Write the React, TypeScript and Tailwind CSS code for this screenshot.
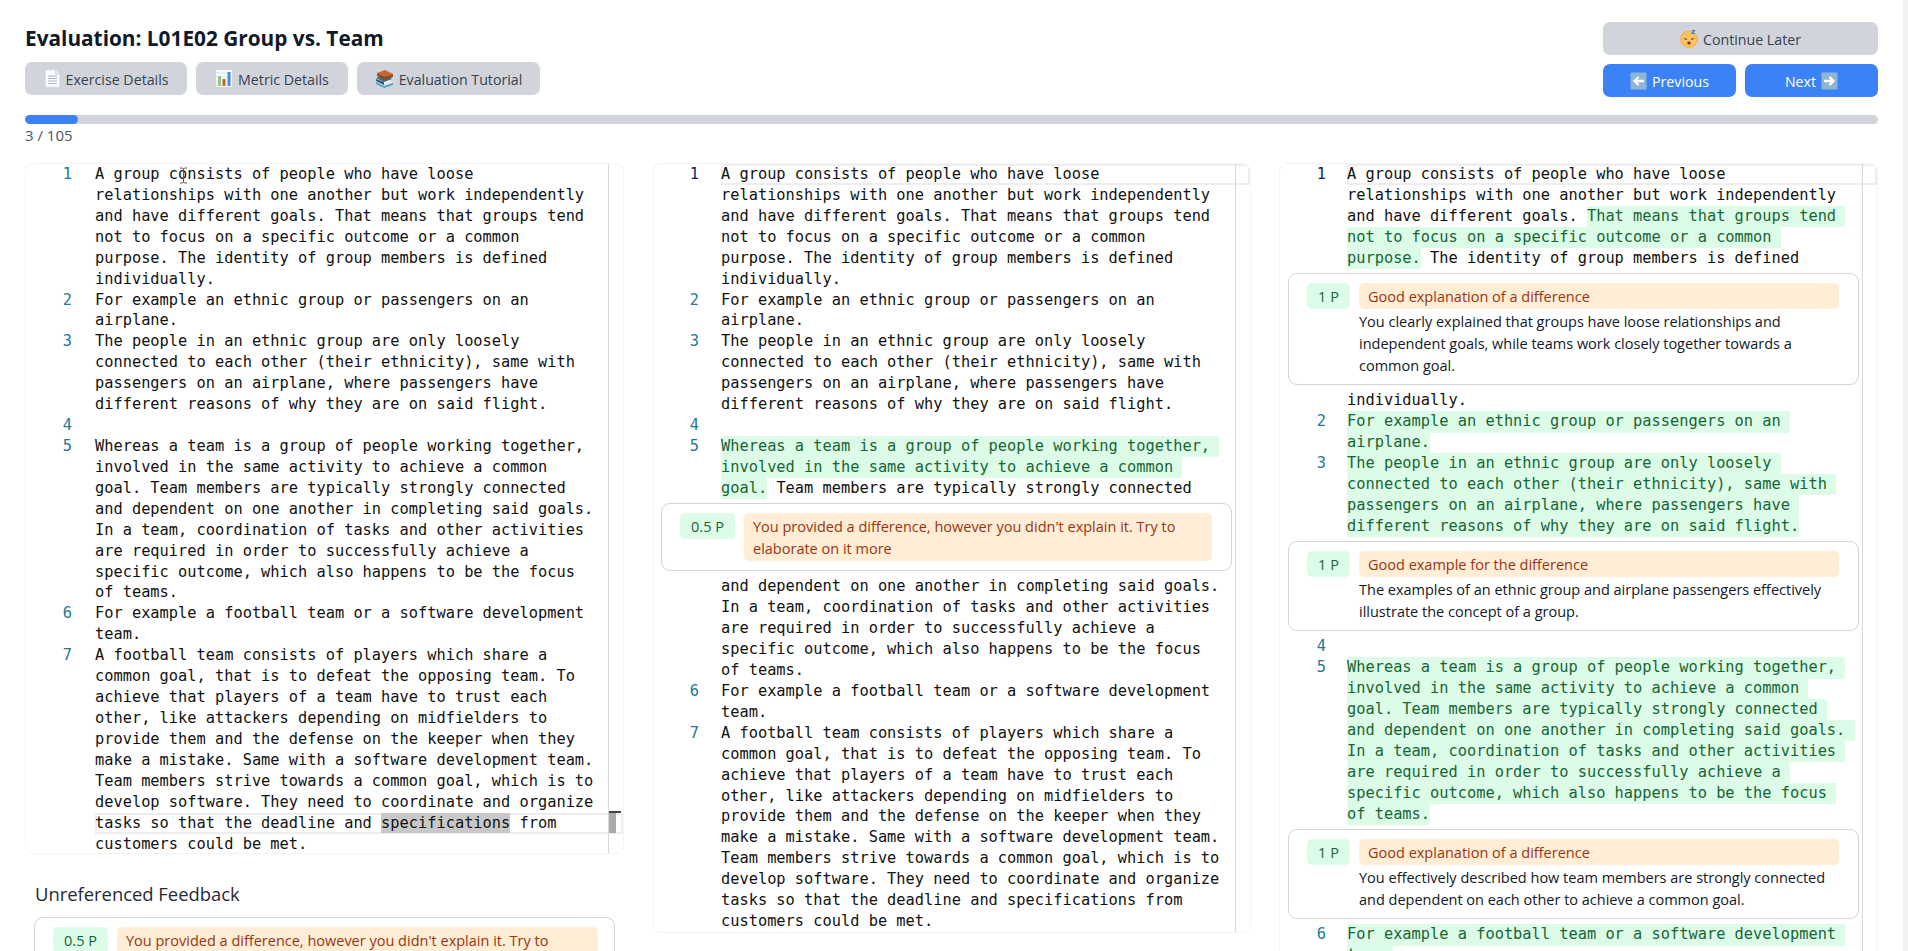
import React from "react";

type Seg = { t: string; h?: boolean; sel?: boolean };
type Row = { n?: number; segs: Seg[]; active?: boolean; box?: boolean } | { card: Fb; mt?: string; mb?: string };
type Fb = { score: string; title: string; body?: string[] };

const plain = (t: string, n?: number): Row => ({ n, segs: [{ t }] });
const hi = (t: string, n?: number): Row => ({ n, segs: [{ t, h: true }] });

const DocIcon = () => (
  <svg width="17" height="19" viewBox="0 0 17 19" className="shrink-0">
    <path d="M1.5 1h10l4 4v13h-14z" fill="#fbfdff" stroke="#cfe6f5" />
    <path d="M11.5 1v4h4" fill="#dbeefa" stroke="#bcdcf0" />
    <path d="M4 7h9M4 9.5h9M4 12h9M4 14.5h9" stroke="#a9b3bd" strokeWidth="1" />
  </svg>
);
const ChartIcon = () => (
  <svg width="18" height="19" viewBox="0 0 18 19" className="shrink-0">
    <rect x="1" y="1" width="16" height="17" fill="#f8fafc" />
    <path d="M1 4h16M1 8h16M1 12h16M1 16h16" stroke="#dbe3ea" strokeWidth="1" />
    <rect x="3" y="7" width="3" height="10" fill="#9cc58a" />
    <rect x="7.5" y="10" width="3" height="7" fill="#c8662f" />
    <rect x="12.5" y="3" width="3" height="14" fill="#4a90d9" />
  </svg>
);
const BooksIcon = () => (
  <svg width="19" height="19" viewBox="0 0 19 19" className="shrink-0">
    <path d="M1 13l8 4 9-3v2l-9 3-8-4z" fill="#4fa9c9" />
    <path d="M1 12l9-3 8 4-9 3z" fill="#e8eef2" />
    <path d="M1 9l9-3 7 4-8 3z" fill="#3e6d86" />
    <path d="M1 10v2l8 4v-3z" fill="#2f5a72" />
    <path d="M2 4l8-3 8 4-8 3z" fill="#c8662f" />
    <path d="M2 4v3l8 4 8-3V5l-8 3z" fill="#8c4a26" />
  </svg>
);
const SleepIcon = () => (
  <svg width="18" height="19" viewBox="0 0 18 19" className="shrink-0">
    <circle cx="9" cy="10.3" r="8.4" fill="#f7c25f" />
    <circle cx="9" cy="10.3" r="8.4" fill="none" stroke="#eda94a" strokeWidth="0.8" />
    <path d="M4 9.5l3 1M14 9.5l-3 1" stroke="#6b4a2a" strokeWidth="1.1" fill="none" />
    <ellipse cx="9" cy="14" rx="1.7" ry="1.5" fill="#6b3a22" />
    <path d="M12 1.5h2.5L12 4.5h3" stroke="#4a7fc1" strokeWidth="1.2" fill="none" />
  </svg>
);
const ArrowIcon = ({ right }: { right?: boolean }) => (
  <svg width="17" height="18" viewBox="0 0 17 18" className="shrink-0">
    <rect x="0.5" y="0.5" width="16" height="17" rx="1" fill="#8fb6d1" />
    <path
      d={right ? "M3 9h9M8.5 5l4 4-4 4" : "M14 9H5M8.5 5l-4 4 4 4"}
      stroke="#ffffff"
      strokeWidth="2.4"
      fill="none"
    />
  </svg>
);
const IBeam = () => (
  <svg width="9" height="17" viewBox="0 0 9 17" className="absolute left-[153px] top-[3px]">
    <path d="M1 1h2.5l1 1 1-1H8M4.5 2v13M1 16h2.5l1-1 1 1H8" stroke="#555" strokeWidth="1" fill="none" />
  </svg>
);

const GrayButton = ({ icon, label, w }: { icon: React.ReactNode; label: string; w: string }) => (
  <button className={`flex h-[33px] items-center justify-center gap-[5px] rounded-[7px] bg-[#d1d5db] text-[14.2px] text-[#374151] ${w}`}>
    {icon}
    <span className="pt-[2px]">{label}</span>
  </button>
);

const Badge = ({ score }: { score: string }) => (
  <div className={`flex h-[26px] shrink-0 items-center justify-center rounded-[5px] bg-[#dcfce7] pt-[1px] text-[#166534] ${score === "1 P" ? "w-[43px]" : "w-[55px]"}`}>{score}</div>
);

const Card = ({ fb, mt, mb }: { fb: Fb; mt?: string; mb?: string }) => (
  <div className={`ml-[8px] w-[571px] ${mt ?? "mt-[4.6px]"} ${mb ?? "mb-[5px]"} flex items-start gap-[9px] rounded-[9px] border border-[#d1d5db] bg-white pb-[9px] pl-[18px] pr-[19px] pt-[9px] font-['Open_Sans',sans-serif] text-[14.5px] leading-[22px]`}>
    <Badge score={fb.score} />
    <div className="min-w-0 flex-1">
      <div className="rounded-[5px] bg-[#ffedd5] px-[9px] pb-[1px] pt-[3px] text-[#9a3412]">{fb.title}</div>
      {fb.body && (
        <div className="-mb-[2px] mt-[2px]">
          {fb.body.map((l) => (
            <div key={l} className="whitespace-pre text-[#111827]">{l}</div>
          ))}
        </div>
      )}
    </div>
  </div>
);

const Line = ({ row, gutter, box }: { row: any; gutter: string; box?: boolean }) => (
  <div className="relative flex h-[20.93px] font-['DejaVu_Sans_Mono',monospace] text-[15.33px] leading-[20.9px]">
    <div className={`${gutter} shrink-0 text-right ${row.active ? "text-[#0b216f]" : "text-[#237893]"}`}>{row.n ?? ""}</div>
    <div className="relative flex-1 whitespace-pre text-[#111]">
      {box && <div className="absolute inset-y-0 left-0 right-0 border-2 border-[#eeeeee]" />}
      {row.segs.map((s: Seg, i: number) =>
        s.h ? (
          <span key={i} className="relative inline-block h-[21.5px] rounded-[2px] bg-[#dcfce7] text-[#166534]">{s.t}</span>
        ) : s.sel ? (
          <span key={i} className="relative inline-block h-[20.9px] bg-[#c8c8c8]">{s.t}</span>
        ) : (
          <span key={i} className="relative">{s.t}</span>
        ),
      )}
    </div>
  </div>
);

const Panel = ({ rows, gutter, h, extra }: { rows: Row[]; gutter: string; h: string; extra?: React.ReactNode }) => (
  <div className={`relative overflow-hidden rounded-[9px] border border-[#f3f4f6] bg-white ${h}`}>
    {rows.map((r: any, i) =>
      r.card ? (
        <Card key={i} fb={r.card} mt={r.mt} mb={r.mb} />
      ) : (
        <Line key={i} row={r} gutter={gutter} box={r.box} />
      ),
    )}
    <div className="absolute bottom-0 left-[582px] top-0 w-px bg-[#d8d8d8]" />
    {extra}
  </div>
);

const line1 = [
  "A group consists of people who have loose",
  "relationships with one another but work independently",
  "and have different goals. That means that groups tend",
  "not to focus on a specific outcome or a common",
  "purpose. The identity of group members is defined",
  "individually.",
];
const line2 = ["For example an ethnic group or passengers on an", "airplane."];
const line3 = [
  "The people in an ethnic group are only loosely",
  "connected to each other (their ethnicity), same with",
  "passengers on an airplane, where passengers have",
  "different reasons of why they are on said flight.",
];
const line5 = [
  "Whereas a team is a group of people working together,",
  "involved in the same activity to achieve a common",
  "goal. Team members are typically strongly connected",
  "and dependent on one another in completing said goals.",
  "In a team, coordination of tasks and other activities",
  "are required in order to successfully achieve a",
  "specific outcome, which also happens to be the focus",
  "of teams.",
];
const line6 = ["For example a football team or a software development", "team."];
const line7 = [
  "A football team consists of players which share a",
  "common goal, that is to defeat the opposing team. To",
  "achieve that players of a team have to trust each",
  "other, like attackers depending on midfielders to",
  "provide them and the defense on the keeper when they",
  "make a mistake. Same with a software development team.",
  "Team members strive towards a common goal, which is to",
  "develop software. They need to coordinate and organize",
  "tasks so that the deadline and specifications from",
  "customers could be met.",
];

const block = (ls: string[], n?: number): Row[] => ls.map((t, i) => plain(t, i === 0 ? n : undefined));

const col1: Row[] = [
  ...block(line1, 1),
  ...block(line2, 2),
  ...block(line3, 3),
  plain("", 4),
  ...block(line5, 5),
  ...block(line6, 6),
  ...block(line7.slice(0, 8), 7),
  { box: true, segs: [{ t: "tasks so that the deadline and " }, { t: "specifications", sel: true }, { t: " from" }] },
  plain(line7[9]),
];

const halfFb: Fb = {
  score: "0.5 P",
  title: "You provided a difference, however you didn't explain it. Try to elaborate on it more",
};

const col2: Row[] = [
  { n: 1, active: true, box: true, segs: [{ t: line1[0] }] },
  ...block(line1.slice(1)),
  ...block(line2, 2),
  ...block(line3, 3),
  plain("", 4),
  hi(line5[0] + " ", 5),
  hi(line5[1] + " "),
  { segs: [{ t: "goal.", h: true }, { t: " Team members are typically strongly connected" }] },
  { card: halfFb },
  ...block(line5.slice(3)),
  ...block(line6, 6),
  ...block(line7, 7),
];

const col3: Row[] = [
  { n: 1, active: true, box: true, segs: [{ t: line1[0] }] },
  plain(line1[1]),
  { segs: [{ t: "and have different goals. " }, { t: "That means that groups tend ", h: true }] },
  hi(line1[3] + " "),
  { segs: [{ t: "purpose.", h: true }, { t: " The identity of group members is defined" }] },
  {
    card: {
      score: "1 P",
      title: "Good explanation of a difference",
      body: [
        "You clearly explained that groups have loose relationships and",
        "independent goals, while teams work closely together towards a",
        "common goal.",
      ],
    },
  },
  plain(line1[5]),
  hi(line2[0] + " ", 2),
  hi(line2[1]),
  hi(line3[0] + " ", 3),
  hi(line3[1] + " "),
  hi(line3[2] + " "),
  hi(line3[3]),
  {
    card: {
      score: "1 P",
      title: "Good example for the difference",
      body: [
        "The examples of an ethnic group and airplane passengers effectively",
        "illustrate the concept of a group.",
      ],
    },
  },
  plain("", 4),
  ...line5.map((t, i) => hi(i === 7 ? t : t + " ", i === 0 ? 5 : undefined)),
  {
    card: {
      score: "1 P",
      title: "Good explanation of a difference",
      body: [
        "You effectively described how team members are strongly connected",
        "and dependent on each other to achieve a common goal.",
      ],
    },
  },
  hi(line6[0] + " ", 6),
  hi(line6[1]),
  ...block(line7, 7),
];

const Col1Extra = () => (
  <>
    <IBeam />
    <div className="absolute left-[583px] top-[648px] h-[21px] w-[7px] bg-[#aaaaaa]" />
    <div className="absolute left-[583px] top-[647px] h-[2px] w-[12px] bg-[#444444]" />
  </>
);

export default function App() {
  return (
    <div className="flex h-[951px] overflow-hidden bg-white font-['Open_Sans',sans-serif]">
      <main className="min-w-0 flex-1 px-[25px] pt-[22px]">
        <header className="flex items-start justify-between">
          <div>
            <h1 className="h-[33px] text-[20.8px] font-bold leading-[32px] text-[#111827]">Evaluation: L01E02 Group vs. Team</h1>
            <div className="mt-[7px] flex gap-[9px]">
              <GrayButton icon={<DocIcon />} label="Exercise Details" w="w-[162px]" />
              <GrayButton icon={<ChartIcon />} label="Metric Details" w="w-[152px]" />
              <GrayButton icon={<BooksIcon />} label="Evaluation Tutorial" w="w-[183px]" />
            </div>
          </div>
          <div className="flex w-[275px] flex-col gap-[9px]">
            <GrayButton icon={<SleepIcon />} label="Continue Later" w="w-full" />
            <div className="flex gap-[9px]">
              <button className="flex h-[33px] flex-1 items-center justify-center gap-[5px] rounded-[7px] bg-[#3b82f6] text-[14.2px] text-white">
                <ArrowIcon />
                <span className="pt-[2px]">Previous</span>
              </button>
              <button className="flex h-[33px] flex-1 items-center justify-center gap-[5px] rounded-[7px] bg-[#3b82f6] text-[14.2px] text-white">
                <span className="pt-[2px]">Next</span>
                <ArrowIcon right />
              </button>
            </div>
          </div>
        </header>
        <div className="mt-[18px] h-[9px] overflow-hidden rounded-full bg-[#d1d5db]">
          <div className="h-full w-[53px] rounded-full bg-[#3b82f6]" />
        </div>
        <div className="mt-[2px] h-[19px] text-[15px] leading-[19px] text-[#4b5563]">3 / 105</div>
        <div className="mt-[18px] grid grid-cols-3 gap-[28px]">
          <div>
            <Panel rows={col1} gutter="w-[69px] pr-[23px]" h="h-[691px]" extra={<Col1Extra />} />
            <h2 className="ml-[10px] mt-[26px] text-[18.4px] leading-[28px] text-[#1f2937]">Unreferenced Feedback</h2>
            <div className="ml-[9px] mt-[9px] flex w-[581px] items-start gap-[9px] rounded-[9px] border border-[#d1d5db] bg-white py-[9px] pl-[18px] pr-[16px] text-[14.5px] leading-[22px]">
              <Badge score="0.5 P" />
              <div className="flex-1 rounded-[5px] bg-[#ffedd5] px-[9px] pb-[1px] pt-[3px] text-[#9a3412]">You provided a difference, however you didn't explain it. Try to elaborate on it more</div>
            </div>
          </div>
          <Panel rows={col2} gutter="w-[68px] pr-[22px]" h="h-[770px]" />
          <Panel rows={col3} gutter="w-[67px] pr-[21px]" h="h-[1300px]" />
        </div>
      </main>
      <aside className="w-[5px] shrink-0 bg-[#f1f1f1]" />
    </div>
  );
}
